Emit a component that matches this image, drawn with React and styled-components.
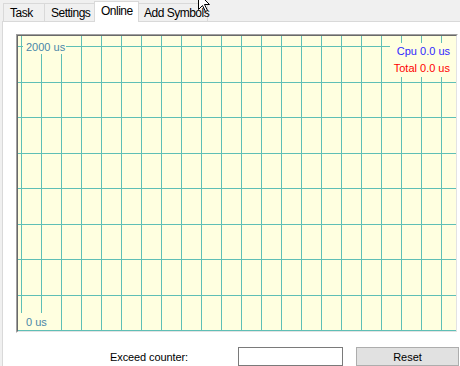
import React from "react";
import styled, { createGlobalStyle } from "styled-components";

const GlobalStyle = createGlobalStyle`
  html, body {
    margin: 0;
    padding: 0;
  }
  body {
    background: #f0f0f0;
    font-family: "Liberation Sans", Arial, sans-serif;
    overflow: hidden;
  }
`;

const Window = styled.div`
  position: relative;
  width: 460px;
  height: 366px;
  overflow: hidden;
  display: flex;
  flex-direction: column;
  background: #f0f0f0;
`;

const TabStrip = styled.div`
  display: flex;
  align-items: flex-end;
  height: 21px;
  padding-left: 3px;
  box-sizing: border-box;
`;

const Tab = styled.div`
  position: relative;
  z-index: ${({ $active }) => ($active ? 2 : 1)};
  box-sizing: border-box;
  width: ${({ $width }) => $width}px;
  height: ${({ $active }) => ($active ? 21 : 18)}px;
  margin-left: -1px;
  margin-bottom: ${({ $active }) => ($active ? -1 : 0)}px;
  border: 1px solid #d9d9d9;
  border-bottom: none;
  background: ${({ $active }) => ($active ? "#ffffff" : "#f0f0f0")};
  display: flex;
  align-items: center;
  padding-left: ${({ $pad }) => $pad}px;
  padding-bottom: ${({ $active }) => ($active ? 2 : 0)}px;
  font-size: 12px;
  letter-spacing: -0.5px;
  white-space: nowrap;
  color: #000;
  &:first-child {
    margin-left: 0;
  }
`;

const Panel = styled.div`
  flex: 1;
  margin-left: 2px;
  border-left: 1px solid #d9d9d9;
  border-top: 1px solid #d9d9d9;
  background: #ffffff;
  padding: 12px 0 0 13px;
  display: flex;
  flex-direction: column;
`;

const ChartFrame = styled.div`
  width: 442px;
  height: 299px;
  box-sizing: border-box;
  border: 1px solid;
  border-color: #a0a0a0 #ffffff #ffffff #a0a0a0;
`;

const ChartArea = styled.div`
  position: relative;
  width: 100%;
  height: 100%;
  box-sizing: border-box;
  border: 1px solid;
  border-color: #696969 #e3e3e3 #e3e3e3 #696969;
  background: #ffffe0;
  overflow: hidden;
`;

const GridSvg = styled.svg`
  display: block;
  position: absolute;
  left: 0;
  top: 0;
`;

const AxisLabel = styled.div`
  position: absolute;
  left: ${({ $left }) => $left}px;
  top: ${({ $top }) => $top}px;
  height: ${({ $height }) => $height}px;
  padding: ${({ $pad }) => $pad};
  display: flex;
  align-items: center;
  background: #ffffe0;
  color: #4a86a8;
  font-size: 11px;
  white-space: nowrap;
`;

const Legend = styled.div`
  position: absolute;
  right: 0;
  top: 7px;
  padding: 0 6px 0 4px;
  background: #ffffe0;
  text-align: right;
  font-size: 11px;
  line-height: 17px;
`;

const LegendLine = styled.div`
  color: ${({ $color }) => $color};
  white-space: nowrap;
`;

const BottomRow = styled.div`
  display: flex;
  align-items: center;
  height: 19px;
  margin-top: 14px;
  margin-left: 94px;
`;

const FieldLabel = styled.div`
  width: 128px;
  font-size: 11px;
  letter-spacing: -0.1px;
  color: #000;
  padding-top: 1px;
`;

const TextBox = styled.div`
  width: 105px;
  height: 19px;
  box-sizing: border-box;
  border: 1px solid #7a7a7a;
  background: #ffffff;
`;

const Button = styled.div`
  width: 103px;
  height: 19px;
  margin-left: 13px;
  box-sizing: border-box;
  border: 1px solid #adadad;
  background: #e1e1e1;
  display: flex;
  align-items: center;
  justify-content: center;
  font-size: 11px;
  color: #000;
`;

const Cursor = styled.svg`
  position: absolute;
  left: 198px;
  top: -7px;
  z-index: 5;
`;

const GRID_W = 438;
const GRID_H = 295;
const GRID_COLOR = "#5fbfb6";

const Grid = () => {
  const vertical = [];
  for (let x = 3; x < GRID_W; x += 20) vertical.push(x);
  const horizontal = [];
  for (let k = 0; k <= 8; k++) horizontal.push(Math.round(10 + 35.5 * k));
  return (
    <GridSvg width={GRID_W} height={GRID_H} shapeRendering="crispEdges">
      {vertical.map((x) => (
        <rect key={"v" + x} x={x} y={0} width={1} height={GRID_H} fill={GRID_COLOR} />
      ))}
      {horizontal.map((y) => (
        <rect key={"h" + y} x={0} y={y} width={GRID_W} height={1} fill={GRID_COLOR} />
      ))}
    </GridSvg>
  );
};

const tabs = [
  { label: "Task", width: 42, pad: 6 },
  { label: "Settings", width: 51, pad: 6 },
  { label: "Online", width: 45, pad: 6, active: true },
  { label: "Add Symbols", width: 70, pad: 5 },
];

const App = () => {
  return (
    <>
      <GlobalStyle />
      <Window>
        <TabStrip>
          {tabs.map((t) => (
            <Tab key={t.label} $width={t.width} $pad={t.pad} $active={t.active}>
              {t.label}
            </Tab>
          ))}
        </TabStrip>
        <Panel>
          <ChartFrame>
            <ChartArea>
              <Grid />
              <AxisLabel $left={5} $top={0} $height={15} $pad="3px 1px 0 3px">
                2000 us
              </AxisLabel>
              <AxisLabel $left={0} $top={277} $height={17} $pad="0 1px 0 8px">
                0 us
              </AxisLabel>
              <Legend>
                <LegendLine $color="#2f1fff">Cpu 0.0 us</LegendLine>
                <LegendLine $color="#ff0000">Total 0.0 us</LegendLine>
              </Legend>
            </ChartArea>
          </ChartFrame>
          <BottomRow>
            <FieldLabel>Exceed counter:</FieldLabel>
            <TextBox />
            <Button>Reset</Button>
          </BottomRow>
        </Panel>
        <Cursor width="14" height="22" viewBox="0 0 14 22">
          <polygon
            points="0.5,0.5 0.5,16.5 4.5,12.5 7.5,18.5 9.5,17.5 6.5,11.5 11.5,11.5"
            fill="#ffffff"
            stroke="#000000"
            strokeWidth="1"
            strokeLinejoin="miter"
          />
        </Cursor>
      </Window>
    </>
  );
};

export default App;
